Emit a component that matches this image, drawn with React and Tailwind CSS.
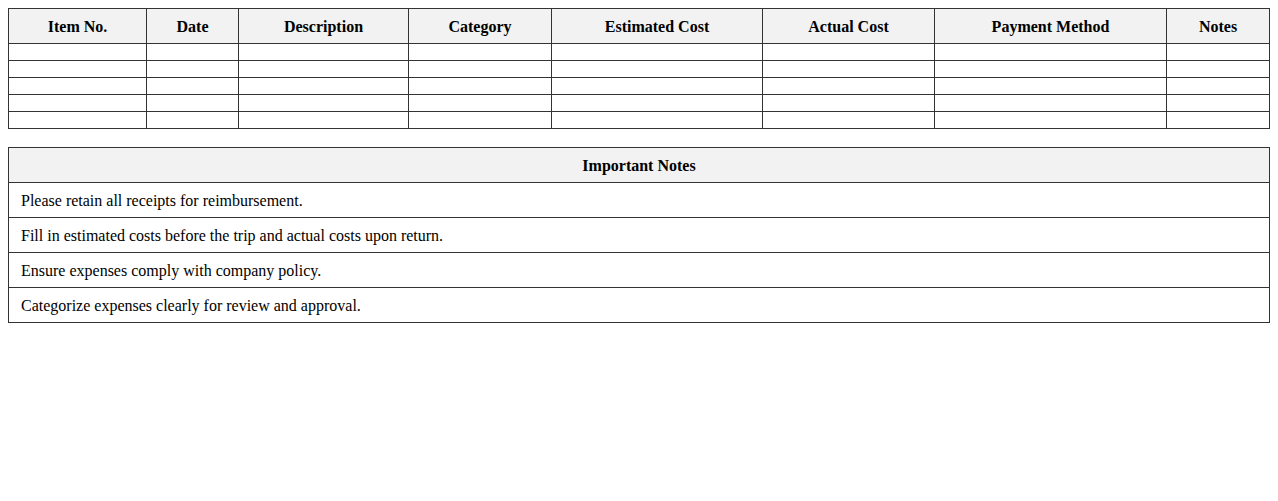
const COLUMNS = [
  { label: "Item No.", w: "w-[138px]" },
  { label: "Date", w: "w-[92px]" },
  { label: "Description", w: "w-[170px]" },
  { label: "Category", w: "w-[143px]" },
  { label: "Estimated Cost", w: "w-[211px]" },
  { label: "Actual Cost", w: "w-[172px]" },
  { label: "Payment Method", w: "w-[232px]" },
  { label: "Notes", w: "w-[103px]" },
];

const ROWS = [1, 2, 3, 4, 5];

const NOTES = [
  "Please retain all receipts for reimbursement.",
  "Fill in estimated costs before the trip and actual costs upon return.",
  "Ensure expenses comply with company policy.",
  "Categorize expenses clearly for review and approval.",
];

export default function App() {
  return (
    <div
      className="min-h-screen bg-white p-2 text-black text-base"
      style={{ fontFamily: "'Liberation Serif', 'Times New Roman', serif" }}
    >
      {/* Expense table */}
      <table className="w-full table-fixed border-collapse border border-[#333]">
        <thead>
          <tr>
            {COLUMNS.map((col) => (
              <th
                key={col.label}
                className={`${col.w} border border-[#333] bg-[#f2f2f2] px-3 pt-[9px] pb-[7px] text-center font-bold leading-[18px]`}
              >
                {col.label}
              </th>
            ))}
          </tr>
        </thead>
        <tbody>
          {ROWS.map((r) => (
            <tr key={r}>
              {COLUMNS.map((col) => (
                <td key={col.label} className="h-[17px] border border-[#333] px-3 py-2" />
              ))}
            </tr>
          ))}
        </tbody>
      </table>

      {/* Notes */}
      <table className="mt-[18px] w-full border-collapse border border-[#333]">
        <thead>
          <tr>
            <th className="border border-[#333] bg-[#f2f2f2] px-3 pt-[9px] pb-[7px] text-center font-bold leading-[18px]">
              Important Notes
            </th>
          </tr>
        </thead>
        <tbody>
          {NOTES.map((note) => (
            <tr key={note}>
              <td className="border border-[#333] px-3 pt-[9px] pb-[7px] text-left leading-[18px]">{note}</td>
            </tr>
          ))}
        </tbody>
      </table>
    </div>
  );
}
